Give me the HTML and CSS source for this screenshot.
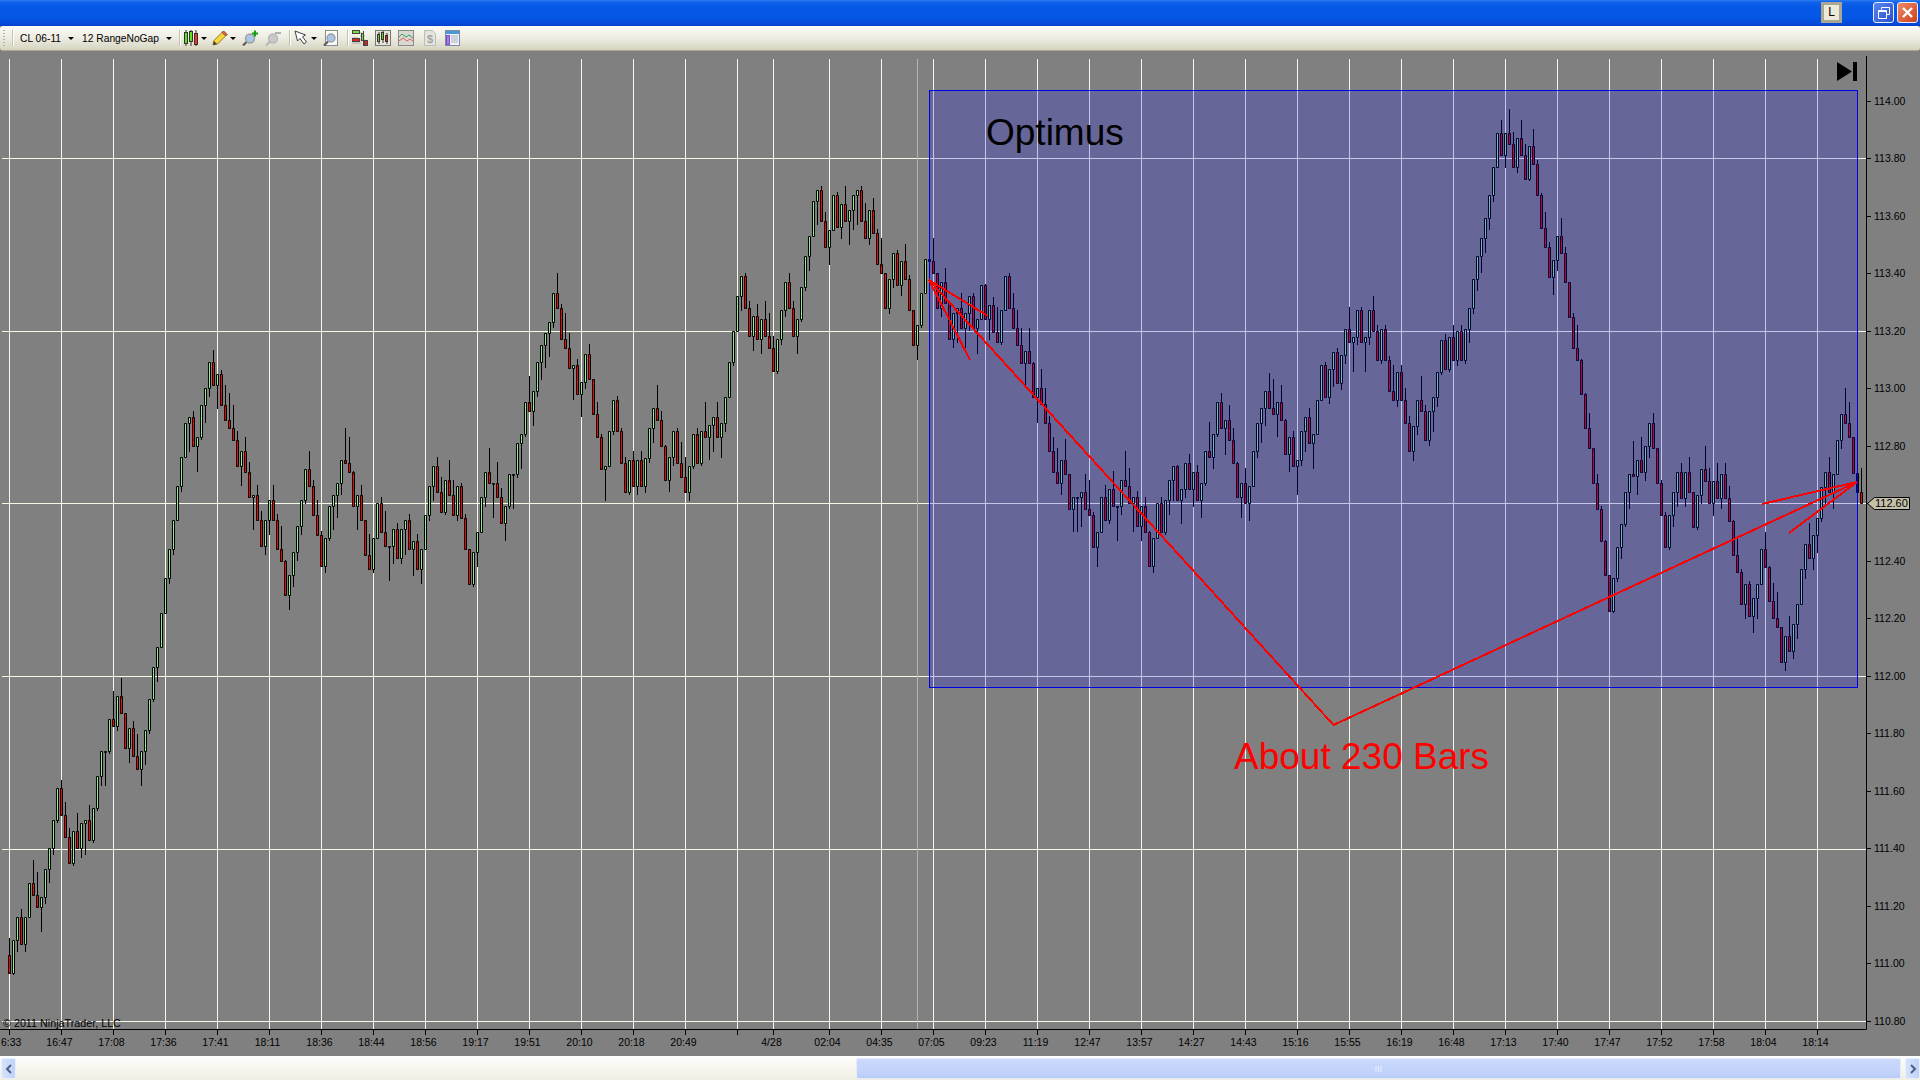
FILE: index.html
```html
<!DOCTYPE html>
<html lang="en">
<head>
    <meta charset="UTF-8">
    <title>CL 06-11 12 RangeNoGap</title>
    <link rel="stylesheet" href="styles.css">
</head>
<body>
    <div class="titlebar">
        <div class="btn-l">L</div>
        <div class="btn-win btn-restore">
            <svg width="14" height="14" viewBox="0 0 14 14"><path d="M4.5 3.5V1.5H12.5V8.5H10M1.5 4.5H9.5V12.5H1.5ZM1.5 5.5H9.5" fill="none" stroke="#fff"/></svg>
        </div>
        <div class="btn-win btn-close">
            <svg width="13" height="13" viewBox="0 0 13 13"><path d="M2 2L11 11M11 2L2 11" stroke="#fff" stroke-width="2.4"/></svg>
        </div>
    </div>

    <div class="toolbar">
        <div class="grip"></div>
        <div class="sep m7"></div>
        <span class="tb-text m7">CL 06-11</span>
        <div class="arrow m7"></div>
        <span class="tb-text m9">12 RangeNoGap</span>
        <div class="arrow m7"></div>
        <div class="sep m8"></div>

        <svg class="m4" width="14" height="16" viewBox="0 0 14 16">
            <path d="M2 0V16M7 0V16M12 0V16" stroke="#333"/>
            <rect x="0.5" y="2.5" width="3" height="11" fill="#5ee01e" stroke="#333"/>
            <rect x="5.5" y="1.5" width="3" height="10" fill="#5ee01e" stroke="#333"/>
            <rect x="10.5" y="3.5" width="3" height="11" fill="#f0341e" stroke="#333"/>
        </svg>
        <div class="arrow m3"></div>

        <svg class="m6" width="16" height="16" viewBox="0 0 16 16">
            <path d="M1 15L2 10.5L11.5 1L15 4.5L5.5 14Z" fill="#f8d838" stroke="#8a7a30"/>
            <path d="M11.5 1L15 4.5L13.5 6L10 2.5Z" fill="#e8605a" stroke="#8a5a30"/>
            <path d="M1 15L2 11L5 14Z" fill="#4a4030"/>
        </svg>
        <div class="arrow m2"></div>

        <svg class="m7" width="16" height="16" viewBox="0 0 16 16">
            <path d="M1 15.5L5 11.5" stroke="#555" stroke-width="2"/>
            <circle cx="8" cy="8.5" r="4.5" fill="#a8c4e8" stroke="#a0a0a0" stroke-width="1.4"/>
            <path d="M10 3.5H16M13 0.5V6.5" stroke="#12a012" stroke-width="2"/>
        </svg>
        <svg class="m7" width="16" height="16" viewBox="0 0 16 16">
            <path d="M1 15.5L5 11.5" stroke="#b4b4b4" stroke-width="2"/>
            <circle cx="8" cy="8.5" r="4.5" fill="#c8c8c8" stroke="#b8b8b8" stroke-width="1.4"/>
            <path d="M10 3H16" stroke="#b0b0b0" stroke-width="2"/>
        </svg>
        <div class="sep m8"></div>

        <svg class="m4" width="14" height="16" viewBox="0 0 14 16">
            <path d="M1 1L3.5 11L6 8.5L10 14L12.5 12L8.5 6.8L11.5 5Z" fill="#fff" stroke="#404048"/>
        </svg>
        <div class="arrow m3"></div>
        <svg class="m7" width="15" height="16" viewBox="0 0 15 16">
            <rect x="2.5" y="0.5" width="12" height="15" fill="#fbfbf8" stroke="#8c8c8c"/>
            <path d="M1 15.5L5 11.5" stroke="#555" stroke-width="2"/>
            <circle cx="8" cy="8" r="4" fill="#a8c4e8" stroke="#9a9a9a" stroke-width="1.3"/>
        </svg>
        <div class="sep m9"></div>

        <svg class="m4" width="16" height="16" viewBox="0 0 16 16">
            <path d="M0 3H10M8 6H13M0 8H6M8 10H13M0 13H9" stroke="#a8a89c"/>
            <rect x="0.5" y="0.5" width="7" height="3" fill="#7ad838" stroke="#444"/>
            <rect x="0.5" y="8.5" width="7" height="3" fill="#e82020" stroke="#444"/>
            <path d="M11.5 1V16" stroke="#444"/>
            <rect x="12.5" y="10.5" width="3" height="5" fill="#e82020" stroke="#444"/>
            <rect x="9.5" y="3.5" width="2" height="7" fill="#7ad838" stroke="#444"/>
        </svg>
        <svg class="m7" width="16" height="16" viewBox="0 0 16 16">
            <rect x="0.5" y="0.5" width="15" height="15" fill="#e6e4da" stroke="#777"/>
            <path d="M4 2V14M8 1V13M12 3V14" stroke="#333"/>
            <rect x="2.5" y="4.5" width="2" height="7" fill="#6ad020" stroke="#333"/>
            <rect x="6.5" y="2.5" width="2" height="7" fill="#6ad020" stroke="#333"/>
            <rect x="10.5" y="5.5" width="2" height="6" fill="#e82020" stroke="#333"/>
        </svg>
        <svg class="m7" width="16" height="16" viewBox="0 0 16 16">
            <rect x="0.5" y="0.5" width="15" height="15" fill="#d8d8d0" stroke="#8a8a8a"/>
            <path d="M1 7L4 4L8 7L11 5L15 8" fill="none" stroke="#30a060"/>
            <path d="M1 11L5 8L9 11L12 9L15 11" fill="none" stroke="#e06060"/>
        </svg>
        <svg class="m9" width="14" height="16" viewBox="0 0 14 16">
            <path d="M1.5 0.5H9.5L12.5 3.5V15.5H1.5Z" fill="#e4e4e0" stroke="#bcbcb8"/>
            <text class="doc-sign" x="7" y="12.5">$</text>
        </svg>
        <svg class="m8" width="15" height="16" viewBox="0 0 15 16">
            <rect x="0.5" y="0.5" width="14" height="15" fill="#f0f2f6" stroke="#7c8ca4"/>
            <rect x="1" y="1" width="13" height="3" fill="#4a98d8"/>
            <rect x="1.5" y="5.5" width="3" height="9" fill="#a878e8" stroke="#7a50c8"/>
            <path d="M6 6H13M6 8H13M6 10H13M6 12H13" stroke="#a8b4c4"/>
        </svg>
    </div>

    <div class="chart">
        <svg id="chart" class="chart-svg" width="1920" height="1006" viewBox="0 51 1920 1006">
            <g id="grid"></g>
            <g id="candles"></g>
            <g id="axes"></g>
            <rect class="region" x="929.5" y="90.5" width="928" height="597"/>
            <text class="note-black" x="986" y="145">Optimus</text>
            <text class="note-red" x="1234" y="769">About 230 Bars</text>
            <path class="arrow-line" d="M929 280L1333.5 725L1857 482M929 280L970 360M929 280L988 316M1857 482L1762 504M1857 482L1789 533"/>
            <path class="last-flag" d="M1867.5 503.5L1874.5 497.5H1909.5V509.5H1874.5Z"/>
            <text class="flag-label" x="1875" y="507">112.60</text>
            <path d="M1837 62V81L1852 71.5ZM1853 62H1857V81H1853Z" fill="#000"/>
            <text class="copyright" x="3" y="1027">© 2011 NinjaTrader, LLC</text>
        </svg>
    </div>

    <div class="scrollbar">
        <div class="scroll-btn">
            <svg width="8" height="10" viewBox="0 0 8 10"><path d="M6 1L2 5L6 9" fill="none" stroke="#4d6185" stroke-width="2"/></svg>
        </div>
        <div class="scroll-track">
            <div class="scroll-thumb">
                <svg width="8" height="6" viewBox="0 0 8 6"><path d="M1 0V6M3.500 0V6M6 0V6" stroke="#e8eefc"/></svg>
            </div>
        </div>
        <div class="scroll-btn">
            <svg width="8" height="10" viewBox="0 0 8 10"><path d="M2 1L6 5L2 9" fill="none" stroke="#4d6185" stroke-width="2"/></svg>
        </div>
    </div>

    <script src="chart.js"></script>
</body>
</html>
```

FILE: styles.css
```css
html, body {
    margin: 0;
    height: 100%;
    overflow: hidden;
}
body {
    display: flex;
    flex-direction: column;
    background-color: #808080;
    font-family: "Liberation Sans", Arial, sans-serif;
}

.titlebar {
    height: 26px;
    flex: none;
    box-sizing: border-box;
    display: flex;
    justify-content: flex-end;
    gap: 3px;
    padding: 2px 2px 0 0;
    background: linear-gradient(#2f7df2 0, #0f62ea 2px, #0558e6 8px, #0556e4 18px, #0548d8 24px, #0440c8 26px);
}
.btn-l {
    width: 21px;
    height: 21px;
    box-sizing: border-box;
    margin-right: 28px;
    border: 3px solid #a9a793;
    background-color: #ece9d8;
    color: #000;
    font-size: 12px;
    line-height: 15px;
    text-align: center;
}
.btn-win {
    width: 21px;
    height: 21px;
    box-sizing: border-box;
    border: 1px solid #e8eefc;
    border-radius: 3px;
    display: flex;
    align-items: center;
    justify-content: center;
}
.btn-restore {
    background: linear-gradient(135deg, #5a86ee, #2a50d0);
}
.btn-close {
    background: linear-gradient(135deg, #ee8a68, #d0401c);
}

.toolbar {
    height: 25px;
    flex: none;
    box-sizing: border-box;
    display: flex;
    align-items: center;
    padding-left: 3px;
    border-bottom: 1px solid #a8a690;
    border-radius: 3px;
    background: linear-gradient(#fbfaf5, #efeee4 45%, #d6d4c0);
}
.toolbar svg {
    flex: none;
}
.grip {
    width: 2px;
    height: 16px;
    background-image: linear-gradient(#b4b2a0 50%, transparent 50%);
    background-size: 2px 3px;
}
.sep {
    width: 1px;
    height: 16px;
    margin-right: -1px;
    background-color: #c4c2ae;
    border-right: 1px solid #fff;
}
.tb-text {
    font-size: 10.25px;
    color: #000;
    white-space: nowrap;
}
.arrow {
    width: 0;
    height: 0;
    margin-right: -1px;
    border-left: 3px solid transparent;
    border-right: 3px solid transparent;
    border-top: 3px solid #000;
}
.doc-sign {
    font-size: 11px;
    font-weight: bold;
    fill: #a4a4a0;
    text-anchor: middle;
}
.m2 { margin-left: 2px; }
.m3 { margin-left: 3px; }
.m4 { margin-left: 4px; }
.m6 { margin-left: 6px; }
.m7 { margin-left: 7px; }
.m8 { margin-left: 8px; }
.m9 { margin-left: 9px; }

.chart {
    flex: 1;
    min-height: 0;
    background-color: #808080;
}
.chart-svg {
    display: block;
}
.grid-line {
    stroke: #f8f8e8;
    stroke-width: 1;
}
.grid-dim {
    stroke: #b4b4b4;
    stroke-width: 1;
}
.wick, .axis-line {
    stroke: #000;
    stroke-width: 1;
    fill: none;
}
.body-up {
    fill: #90ee90;
    stroke: #000;
    stroke-width: 1;
}
.body-down {
    fill: #ff0000;
    stroke: #000;
    stroke-width: 1;
}
.region {
    fill: rgba(0, 0, 255, 0.2);
    stroke: #0000e6;
    stroke-width: 1;
}
.arrow-line {
    fill: none;
    stroke: #ff0000;
    stroke-width: 2;
    shape-rendering: crispEdges;
}
.note-black {
    font-size: 37px;
    fill: #000;
}
.note-red {
    font-size: 37px;
    fill: #ff0000;
}
.tick-label {
    font-size: 10.5px;
    fill: #000;
}
.tick-time {
    font-size: 10.5px;
    fill: #000;
    text-anchor: middle;
}
.copyright {
    font-size: 10.75px;
    fill: #000;
}
.flag-label {
    font-size: 11px;
    fill: #000;
}
.last-flag {
    fill: #c4c0a8;
    stroke: #000;
    stroke-width: 1;
}

.scrollbar {
    height: 24px;
    flex: none;
    box-sizing: border-box;
    display: flex;
    padding: 2px 0 1px 1px;
    background: linear-gradient(#fefefd, #f0eee2);
}
.scroll-btn {
    width: 15px;
    flex: none;
    box-sizing: border-box;
    border: 1px solid #e8f0fe;
    border-radius: 2px;
    background: linear-gradient(90deg, #d4e2fc, #c0d2f6);
    display: flex;
    align-items: center;
    justify-content: center;
}
.scroll-track {
    flex: 1;
    display: flex;
    justify-content: flex-end;
    padding-right: 4px;
}
.scroll-thumb {
    width: 1045px;
    box-sizing: border-box;
    border: 1px solid #e4ecfc;
    border-radius: 2px;
    background: linear-gradient(#cad9fc, #c2d3fa 70%, #b8cbf4);
    display: flex;
    align-items: center;
    justify-content: center;
}
```

FILE: chart.js
```js
// bar closes in pixels, one per 12 range bar. open = previous close
const closes = [
    973, 940, 917, 944, 917, 883, 895, 907, 897, 869, 848, 820, 788, 815, 837, 863, 831, 848,
    823, 820, 840, 808, 776, 751, 751, 719, 726, 696, 713, 748, 728, 756, 769, 751, 730, 699,
    667, 647, 613, 578, 549, 520, 486, 457, 423, 417,
    446, 437, 405, 388, 362, 385, 374, 405, 420, 428,
    440, 466, 451, 472, 497, 495, 520, 546, 520, 500,
    520, 549, 561, 595, 575, 552, 526, 500, 469, 486,
    515, 535, 566, 538, 506, 495, 483, 460, 463, 472,
    506, 495, 520, 555, 569, 538, 503, 532, 546, 546,
    529, 558, 529, 520, 549, 541, 569, 549, 515, 486,
    466, 492, 512, 480, 495, 515, 486, 518, 549, 584,
    552, 532, 497, 472, 483, 483, 497, 523, 506, 474,
    474, 443, 434, 402, 411, 391, 362, 345, 333, 322,
    293, 308, 339, 348, 368, 365, 394, 382, 354, 379,
    414, 437, 469, 466, 431, 400, 431, 463, 492, 460,
    486, 460,
    486, 458, 428, 408, 420, 446, 480, 457, 431, 463,
    477, 492, 466, 434, 463, 431, 437, 425, 417, 437,
    423, 397, 362, 331, 296, 276, 308, 336, 316, 339,
    319, 336, 348, 371, 339, 310, 282, 308, 336, 319,
    287, 256, 236, 201, 190, 221, 247, 230, 195, 227,
    204, 221, 210, 195, 190, 221, 238, 210, 233, 264,
    273, 308, 279, 253, 285, 261, 279, 310, 345, 325,
    293, 259, 261, 273, 308, 282, 303, 339, 313, 308,
    328, 313, 296, 328, 319, 285, 319, 305, 332, 342,
    310, 276, 308, 328, 345, 363, 351, 363, 397, 388,
    404, 423, 451, 472, 483, 460, 474, 509, 497, 497,
    492, 509, 515, 547, 532, 497, 520, 489, 506, 506,
    480, 486, 503, 497, 526, 506, 532, 566, 538, 503,
    532, 500, 480, 466, 500, 489, 463, 489, 472, 500,
    483, 451, 457, 434, 402, 428, 420, 440, 463, 497,
    483, 503, 486, 451, 423, 408, 391, 408, 414, 402,
    420, 454, 437, 466, 460, 431, 417, 443, 434, 400,
    365, 397, 369, 352, 383, 355, 329, 342, 337, 310,
    342, 337, 310, 331, 360, 329, 360, 391, 400, 372,
    400, 423, 451, 426, 400, 411, 440, 411, 397, 372,
    340, 369, 337, 360, 331, 360, 329, 308, 279, 256,
    238, 218, 195, 167, 133, 155, 133, 144, 167, 138,
    155, 179, 146, 164, 195, 228, 247, 277, 260, 236,
    253, 282, 317, 348, 360, 394, 428, 448, 483, 509,
    541, 575, 611, 578, 547, 524, 492, 474, 476, 460,
    472, 446, 423, 448, 483, 515, 547, 515, 492, 472,
    498, 472, 492, 527, 495, 469, 481, 503, 481, 498,
    474, 498, 521, 555, 572, 604, 584, 616, 598, 584,
    549, 567, 601, 618, 627, 662, 636, 651, 624, 604,
    569, 544, 558, 535, 518, 487, 472, 492, 474, 440,
    414, 423, 437, 473, 492, 503
];

const RANGE = 35; // 12 ticks in pixels

const timeLabels = [
    [9, "6:33"], [61, "16:47"], [113, "17:08"], [165, "17:36"], [217, "17:41"], [269, "18:11"],
    [321, "18:36"], [373, "18:44"], [425, "18:56"], [477, "19:17"], [529, "19:51"], [581, "20:10"],
    [633, "20:18"], [685, "20:49"], [737, ""], [773, "4/28"], [829, "02:04"], [881, "04:35"],
    [933, "07:05"], [985, "09:23"], [1037, "11:19"], [1089, "12:47"], [1141, "13:57"], [1193, "14:27"],
    [1245, "14:43"], [1297, "15:16"], [1349, "15:55"], [1401, "16:19"], [1453, "16:48"], [1505, "17:13"],
    [1557, "17:40"], [1609, "17:47"], [1661, "17:52"], [1713, "17:58"], [1765, "18:04"], [1817, "18:14"]
];

const gridRows = [158, 331, 503, 676, 849, 1021];

let gridHtml = "";
gridRows.forEach(function (y) {
    gridHtml += `<path class="grid-line" d="M2 ${y + 0.5}H1866"/>`;
});
timeLabels.forEach(function (t) {
    gridHtml += `<path class="grid-line" d="M${t[0] + 0.5} 59V1029"/>`;
});
gridHtml += '<path class="grid-dim" d="M917.5 59V1029"/>';
document.getElementById("grid").innerHTML = gridHtml;

let wicks = "";
let bodiesUp = "";
let bodiesDown = "";
let prev = 955;
closes.forEach(function (close, i) {
    const x = 9 + i * 4;
    const up = close <= prev;
    const top = Math.min(close, prev);
    const h = Math.max(Math.abs(close - prev), 1);
    if (up) {
        wicks += `M${x + 0.5} ${close}V${close + RANGE}`;
        bodiesUp += `M${x - 0.5} ${top + 0.5}h2v${h}h-2Z`;
    } else {
        wicks += `M${x + 0.5} ${close - RANGE}V${close}`;
        bodiesDown += `M${x - 0.5} ${top + 0.5}h2v${h}h-2Z`;
    }
    prev = close;
});
document.getElementById("candles").innerHTML =
    `<path class="wick" d="${wicks}"/><path class="body-up" d="${bodiesUp}"/><path class="body-down" d="${bodiesDown}"/>`;

let axes = '<path class="axis-line" d="M1866.5 56V1029.5H0"/>';
timeLabels.forEach(function (t) {
    axes += `<path class="axis-line" d="M${t[0] + 0.5} 1029V1035"/>`;
    if (t[1] === "6:33") {
        axes += `<text class="tick-label" x="1" y="1046">${t[1]}</text>`;
    } else if (t[1]) {
        axes += `<text class="tick-time" x="${t[0] - 1.5}" y="1046">${t[1]}</text>`;
    }
});
for (let n = 0; n <= 16; n++) {
    const price = 114 - n * 0.2;
    const y = Math.round(100.5 + n * 57.53);
    axes += `<path class="axis-line" d="M1866 ${y + 0.5}H1871"/>`;
    // 112.60 sits in the last price flag
    if (n !== 7) {
        axes += `<text class="tick-label" x="1874" y="${y + 4}">${price.toFixed(2)}</text>`;
    }
}
document.getElementById("axes").innerHTML = axes;
```
